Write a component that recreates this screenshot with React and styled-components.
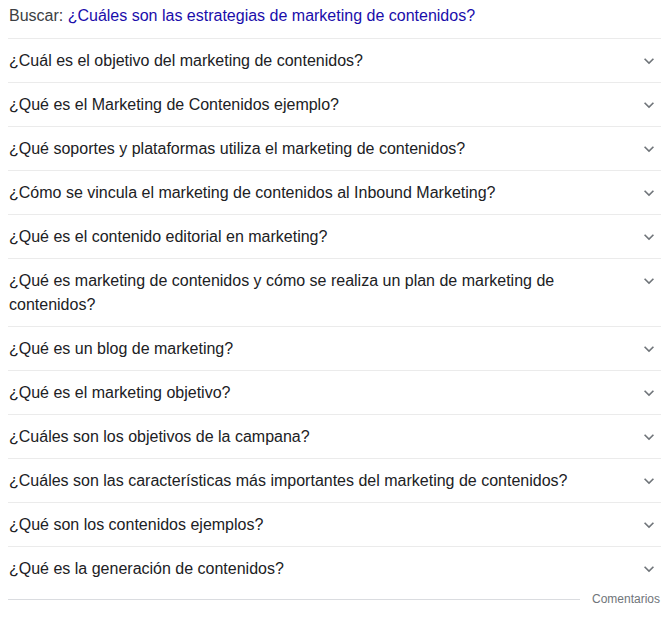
import React from 'react';
import styled, { createGlobalStyle } from 'styled-components';

const GlobalStyle = createGlobalStyle`
  body {
    margin: 0;
    background: #fff;
    font-family: "Liberation Sans", Arial, sans-serif;
  }
`;

const questions = [
  '¿Cuál es el objetivo del marketing de contenidos?',
  '¿Qué es el Marketing de Contenidos ejemplo?',
  '¿Qué soportes y plataformas utiliza el marketing de contenidos?',
  '¿Cómo se vincula el marketing de contenidos al Inbound Marketing?',
  '¿Qué es el contenido editorial en marketing?',
  '¿Qué es marketing de contenidos y cómo se realiza un plan de marketing de contenidos?',
  '¿Qué es un blog de marketing?',
  '¿Qué es el marketing objetivo?',
  '¿Cuáles son los objetivos de la campana?',
  '¿Cuáles son las características más importantes del marketing de contenidos?',
  '¿Qué son los contenidos ejemplos?',
  '¿Qué es la generación de contenidos?',
];

function Chevron() {
  return (
    <svg width="20" height="20" viewBox="0 0 24 24" fill="#70757a">
      <path d="M16.59 8.59L12 13.17 7.41 8.59 6 10l6 6 6-6z" />
    </svg>
  );
}

export default function App() {
  return (
    <Page>
      <GlobalStyle />
      <SearchRow>
        Buscar: <SearchLink>¿Cuáles son las estrategias de marketing de contenidos?</SearchLink>
      </SearchRow>
      <List>
        {questions.map((q, i) => (
          <Item key={i} last={i === questions.length - 1}>
            <Question>{q}</Question>
            <Toggle><Chevron /></Toggle>
          </Item>
        ))}
      </List>
      <Footer>
        <FooterLine />
        <FooterLabel>Comentarios</FooterLabel>
      </Footer>
    </Page>
  );
}

const Page = styled.div`
  width: 653px;
  padding: 4px 0 0 8px;
  box-sizing: content-box;
`;

const SearchRow = styled.div`
  height: 35px;
  padding-left: 1px;
  font-size: 16px;
  line-height: 24px;
  color: #3c4043;
  border-bottom: 1px solid #ebebeb;
  box-sizing: border-box;
`;

const SearchLink = styled.span`
  color: #1a0dab;
`;

const List = styled.div`
  display: flex;
  flex-direction: column;
`;

const Item = styled.div`
  display: flex;
  align-items: flex-start;
  justify-content: space-between;
  padding: 10px 0 9px 1px;
  border-bottom: ${p => (p.last ? 'none' : '1px solid #ebebeb')};
`;

const Question = styled.div`
  flex: 1;
  font-size: 16px;
  line-height: 24px;
  color: #202124;
  padding-right: 30px;
`;

const Toggle = styled.div`
  width: 20px;
  height: 24px;
  display: flex;
  align-items: center;
  justify-content: center;
  margin-right: 2px;
`;

const Footer = styled.div`
  display: flex;
  align-items: center;
  gap: 12px;
  margin-top: 2px;
  height: 14px;
`;

const FooterLine = styled.div`
  flex: 1;
  height: 1px;
  background: #dadce0;
`;

const FooterLabel = styled.span`
  font-size: 12px;
  color: #70757a;
  padding-right: 1px;
`;
